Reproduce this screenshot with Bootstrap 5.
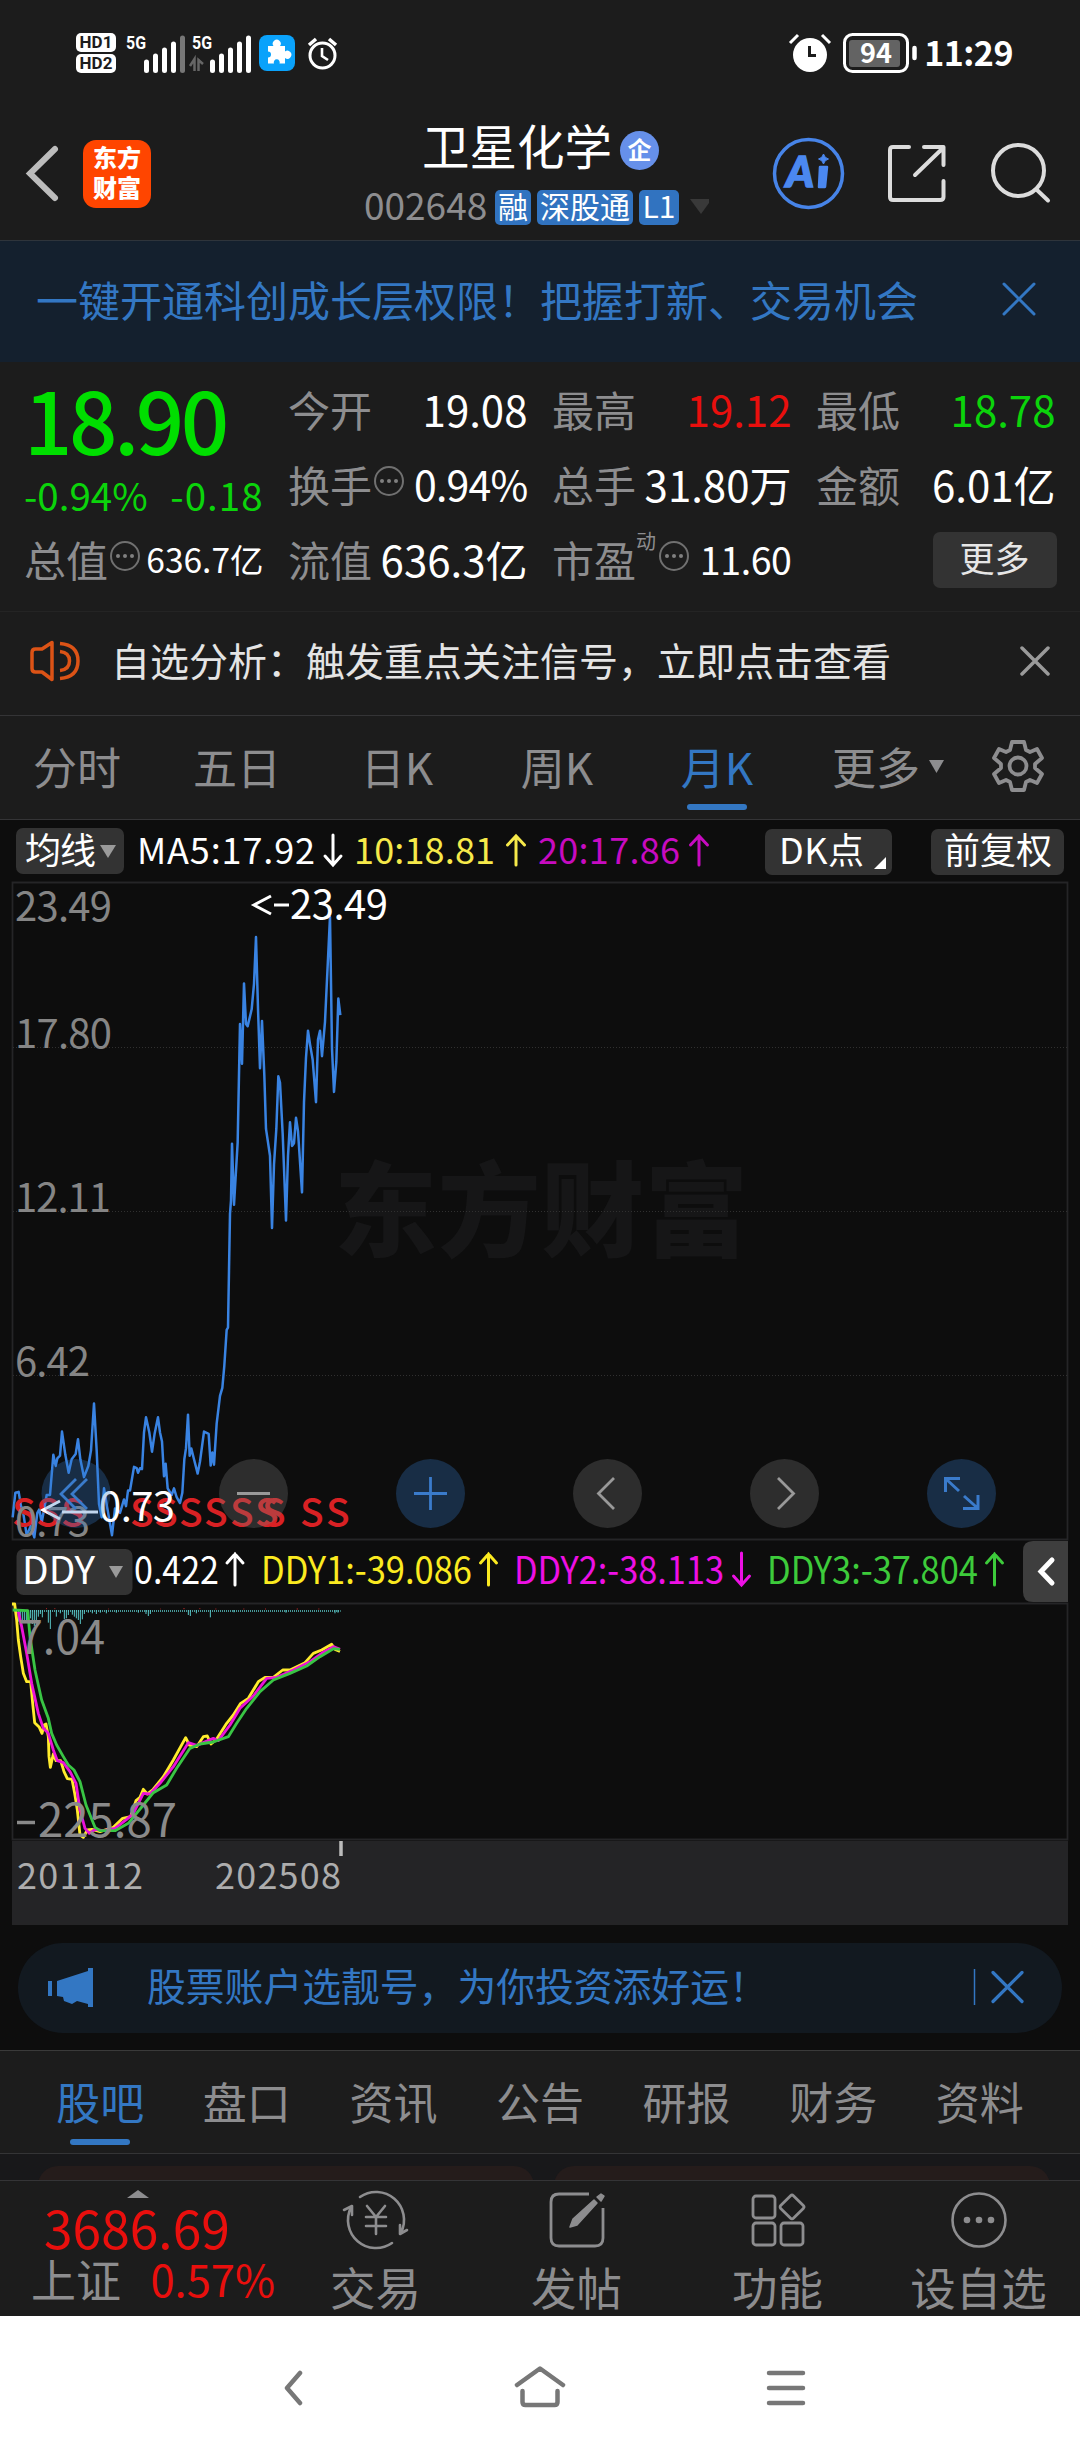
<!DOCTYPE html>
<html lang="zh-CN" data-bs-theme="dark">
<head>
<meta charset="utf-8">
<meta name="viewport" content="width=device-width, initial-scale=1">
<title>卫星化学 002648</title>
<link href="https://cdn.jsdelivr.net/npm/bootstrap@5.3.0/dist/css/bootstrap.min.css" rel="stylesheet">
<style>
body{width:1080px;height:2460px;margin:0;overflow:hidden;background:#0d0d0d;color:#fff;font-family:"Noto Sans CJK SC","Noto Sans",sans-serif;font-size:42px;line-height:1;white-space:nowrap}
svg{display:block;flex:none}
.panel-bg{background:#1c1c1c}
.rule-b{border-bottom:1px solid #343436}
.t-grey{color:#8d8d8f}.t-blue{color:#3377c3}.t-up{color:#e90f0d}.t-down{color:#0bd40b}
.status-bar{height:120px;padding:33px 67px 0 76px}
.hd-chip{width:40px;height:19px;border-radius:5px;background:#fff;color:#1c1c1c;font:700 17px/19px "Roboto",sans-serif;text-align:center}
.clock-txt{font:700 34px/40px "Noto Sans CJK SC",sans-serif;letter-spacing:-.5px;margin-left:6px;margin-top:-1px}
.top-nav{height:121px;border-bottom:1px solid #2e343b}
.brand-logo{width:68px;height:68px;border-radius:13px;background:#ff4500;font-size:24px;font-weight:900;line-height:30px;text-align:center;padding-top:2px}
.stock-name{font-size:47.5px;line-height:50px}
.ent-mark{width:39px;height:39px;border-radius:50%;background:#6690ea;font-size:24px;font-weight:700;line-height:36px;text-align:center}
.stock-code{font-size:37px;line-height:35px}
.tag-chip{height:35px;border-radius:5px;background:#3173c0;font-size:30px;line-height:31px;text-align:center}
.promo{height:121px;background:#14202e;padding:0 44px 5px 36px}
.quotes{height:249px;padding:9px 24px 0;gap:24.5px}
.q-col{width:239.5px}
.q-row{height:75px;display:flex;align-items:center;justify-content:space-between}
.last-price{height:75px;font-size:85px;font-weight:500;line-height:75px;letter-spacing:-3.5px;color:#00de00}
.last-price span{display:inline-block;padding-top:9px}
.notice{height:105px;padding:0 30px 5px 30px;font-size:39px;color:#e4e4e4;border-top:1px solid #242424}
.k-tabs{height:104px;font-size:44px;padding-bottom:3px}
.k-tabs .k-tab{width:160px;text-align:center}
.on-tab{position:relative}
.on-tab::after{content:"";position:absolute;left:50%;margin-left:-30px;top:60px;width:60px;height:6px;border-radius:3px;background:#3377c3}
.chart-zone{height:1230px}
.tool-chip{background:#333;border-radius:7px}
.ad-pill{width:1044px;height:90px;border-radius:45px;background:#121920;margin:18px 18px 16px;padding:0 38px 3px 30px;font-size:38.8px}
.info-tabs{height:104px;border-top:1px solid #3a3a3a;padding:0 27px 3px;font-size:44px}
.info-tabs>div{flex:1;text-align:center}
.peek{height:27px;background:#18181a;padding:12px 30px 0 38px;gap:20px;overflow:hidden}
.peek div{flex:1;height:40px;border-radius:26px;background:#251c1b}
.dock{height:135px}
.dock-item{width:201px;padding-top:10px;font-size:45.5px}
.dock-item svg{height:58px;margin-bottom:15px;overflow:visible}
.idx-box{width:275px;padding:9px 0 0 31px}
.sys-nav{height:144px;background:#fff}
</style>
</head>
<body>

<!-- status bar -->
<div class="status-bar panel-bg d-flex align-items-start">
  <div class="d-flex flex-column" style="gap:2px"><div class="hd-chip">HD1</div><div class="hd-chip">HD2</div></div>
  <svg class="ms-2" width="216" height="42" viewBox="124 33 216 42">
    <g fill="#fff" font-family="Roboto" font-weight="700" font-size="18"><text x="126" y="49" textLength="20" lengthAdjust="spacingAndGlyphs">5G</text><text x="192" y="49" textLength="20" lengthAdjust="spacingAndGlyphs">5G</text></g>
    <g stroke="#fff" stroke-width="5" stroke-linecap="round"><path d="M146.500 62V70.500M155.500 56V70.500M164.500 50V70.500M173.500 44V70.500M212.500 62V70.500M221.500 56V70.500M230.500 50V70.500M239.500 44V70.500M248.500 38V70.500"/><path d="M182.500 38V70.500" stroke="#777"/></g>
    <path d="M190 66L194.500 59V71M198.500 71V59M198.500 71V60L203 64" fill="none" stroke="#666" stroke-width="2.500"/>
    <rect x="259" y="35" width="36" height="36" rx="8" fill="#0aa2fb"/>
    <path d="M268 46h5.500a4 4 0 1 1 6.500 0h5v5.500a4 4 0 1 1 0 6.500v5.500h-5.500a3 3 0 1 0-5.500 0h-6v-6a3 3 0 1 0 0-6z" fill="#fff"/>
    <g fill="none" stroke="#fff"><circle cx="322.500" cy="55.500" r="12.500" stroke-width="3"/><path d="M322 48v8l6 4" stroke-width="2.600"/><path d="M309 45l7-6M329 39l7 6" stroke-width="3.500"/></g>
  </svg>
  <svg class="ms-auto" width="130" height="42" viewBox="788 33 130 42">
    <circle cx="810" cy="55" r="17" fill="#fff"/><path d="M809.500 46v9.500h6.500" fill="none" stroke="#1c1c1c" stroke-width="3"/><path d="M790 43l8-8M822 35l8 8" stroke="#fff" stroke-width="3"/>
    <rect x="844.500" y="34.500" width="63" height="37" rx="8" fill="none" stroke="#fff" stroke-width="3"/><rect x="849" y="40" width="51" height="27" rx="3" fill="#636363"/><path d="M914.500 48v10" stroke="#fff" stroke-width="4.500" stroke-linecap="round"/>
    <text x="860" y="63" font-size="27" font-weight="700" fill="#fff" textLength="32" lengthAdjust="spacingAndGlyphs">94</text>
  </svg>
  <div class="clock-txt">11:29</div>
</div>

<!-- header -->
<header class="top-nav panel-bg d-flex align-items-start">
  <svg width="83" height="90" viewBox="0 120 83 90"><path d="M55 149L30 173.500L55 198" fill="none" stroke="#bcbcbc" stroke-width="6" stroke-linecap="round"/></svg>
  <div class="brand-logo" style="margin-top:20px">东方<br>财富</div>
  <div style="margin-left:213px;width:405px">
    <div class="d-flex align-items-center" style="padding-left:58px"><span class="stock-name">卫星化学</span><span class="ent-mark" style="margin-left:8px;margin-top:11px">企</span></div>
    <div class="d-flex" style="margin-top:20px;gap:6px"><span class="stock-code t-grey" style="width:125px;margin-top:-3px">002648</span><span class="tag-chip" style="width:36px">融</span><span class="tag-chip" style="width:96px">深股通</span><span class="tag-chip" style="width:40px">L1</span>
    <svg width="24" height="35"><path d="M5 9h22l-11 15z" fill="#393939"/></svg></div>
  </div>
  <svg width="311" height="100" viewBox="769 120 311 100">
    <circle cx="808.500" cy="173.500" r="34" fill="none" stroke="#4784e8" stroke-width="3.500"/>
    <text x="786" y="187" font-family="Lato" font-weight="900" font-style="italic" font-size="42" fill="#4b88f0" stroke="#4b88f0" stroke-width="1.500" textLength="28" lengthAdjust="spacingAndGlyphs">A</text>
    <path d="M820 167h7l-2 20h-6z" fill="#4b88f0" stroke="#4b88f0" stroke-width="2.500" stroke-linejoin="round"/><path d="M823.500 154q1 4 5 5q-4 1-5 5q-1-4-5-5q4-1 5-5z" fill="#4b88f0" stroke="#4b88f0"/>
    <g fill="none" stroke="#dcdcdc" stroke-width="4" stroke-linecap="round" stroke-linejoin="round"><path d="M909 147H893Q890 147 890 150V197Q890 200 893 200H940Q943.500 200 943.500 197V181M924 147H943.500V165M943 148L915 175"/><circle cx="1018.500" cy="170.500" r="25.500"/><path d="M1037 190L1048 200.500"/></g>
  </svg>
</header>

<!-- promotion -->
<div class="promo d-flex align-items-center justify-content-between t-blue"><span>一键开通科创成长层权限！把握打新、交易机会</span>
  <svg width="34" height="34"><path d="M2 2L32 32M32 2L2 32" stroke="#3377c3" stroke-width="3" stroke-linecap="round"/></svg></div>

<!-- quotes -->
<section class="quotes panel-bg d-flex">
  <div class="q-col">
    <div class="last-price"><span>18.90</span></div>
    <div class="q-row t-down" style="font-size:38.5px;padding-top:22px"><span>-0.94%</span><span style="letter-spacing:1px">-0.18</span></div>
    <div class="q-row"><span class="d-flex t-grey">总值<svg width="32" height="42"><use href="#more-dot"/></svg></span><span style="font-size:33.500px">636.7亿</span></div>
  </div>
  <div class="q-col">
    <div class="q-row"><span class="t-grey">今开</span><span>19.08</span></div>
    <div class="q-row"><span class="d-flex t-grey">换手<svg width="32" height="42"><use href="#more-dot"/></svg></span><span style="font-size:41px;letter-spacing:-.8px">0.94%</span></div>
    <div class="q-row"><span class="t-grey">流值</span><span>636.3亿</span></div>
  </div>
  <div class="q-col">
    <div class="q-row"><span class="t-grey">最高</span><span class="t-up">19.12</span></div>
    <div class="q-row"><span class="t-grey">总手</span><span>31.80万</span></div>
    <div class="q-row"><span class="d-flex t-grey">市盈<span style="font-size:20px;margin-top:-7px;width:21px">动</span><svg width="32" height="42"><use href="#more-dot"/></svg></span><span style="font-size:37.500px;letter-spacing:-.4px">11.60</span></div>
  </div>
  <div class="q-col">
    <div class="q-row"><span class="t-grey">最低</span><span class="t-down">18.78</span></div>
    <div class="q-row"><span class="t-grey">金额</span><span>6.01亿</span></div>
    <div class="q-row justify-content-end"><span class="tool-chip text-center" style="width:124px;height:56px;font-size:35px;line-height:50px;margin:3px -1px 0 0;color:#e6e6e6">更多</span></div>
  </div>
</section>

<!-- notice -->
<div class="notice panel-bg rule-b d-flex align-items-center">
  <svg width="51" height="44" viewBox="30 640 51 44" fill="none" stroke="#dc5316" stroke-width="3.500" stroke-linejoin="round"><path d="M52 643.500V680.500L42 673H35.500Q32 673 32 669.500V653.500Q32 650 35.500 650H42Z"/><path d="M60 644.500Q78 646 78 662T60 679.500M60 652.500Q69.500 653.500 69.500 662T60 671.500"/></svg>
  <span style="margin-left:30px;padding-bottom:4px">自选分析：触发重点关注信号，立即点击查看</span>
  <svg class="ms-auto" width="30" height="30"><path d="M2 2L28 28M28 2L2 28" stroke="#9a9a9a" stroke-width="3.500" stroke-linecap="round"/></svg>
</div>

<!-- period tabs -->
<nav class="k-tabs panel-bg rule-b d-flex align-items-center t-grey">
  <div class="k-tab" style="margin-left:-3px">分时</div><div class="k-tab">五日</div><div class="k-tab">日K</div><div class="k-tab">周K</div><div class="k-tab on-tab t-blue">月K</div>
  <div class="d-flex align-items-center" style="margin-left:35px">更多<svg width="28" height="40"><path d="M9 14h15l-7.500 13z" fill="#8d8d8f"/></svg></div>
  <svg style="margin-left:42px" width="56" height="56" viewBox="-28 -28 56 56" fill="none" stroke="#8d8d8f" stroke-width="3.800" stroke-linejoin="round"><circle r="8.500"/><path d="M-6 -24H6L8 -16L12 -14L19 -17L24 -8L17 -2V2L24 8L19 17L12 14L8 16L6 24H-6L-8 16L-12 14L-19 17L-24 8L-17 2V-2L-24 -8L-19 -17L-12 -14L-8 -16Z"/></svg>
</nav>

<!-- charts -->
<main class="chart-zone">
<svg width="1080" height="1105" viewBox="0 820 1080 1105" font-family="Noto Sans CJK SC">
  <!-- moving averages -->
  <g fill="#333"><rect x="16" y="828" width="108" height="46" rx="7"/><rect x="765" y="829" width="127" height="46" rx="7"/><rect x="931" y="829" width="133" height="46" rx="7"/></g>
  <g font-size="36" fill="#fff"><text x="25" y="864" textLength="71">均线</text><text x="137" y="864" textLength="178">MA5:17.92</text><text x="779" y="864" textLength="85">DK点</text><text x="944" y="864" textLength="108">前复权</text></g>
  <path d="M100 845h16l-8 13z" fill="#9a9a9a"/><path d="M886 857v12h-12z" fill="#fff"/>
  <g font-size="36"><text x="354" y="864" fill="#f6e94a" textLength="141">10:18.81</text><text x="538" y="864" fill="#c70bc0" textLength="142">20:17.86</text></g>
  <g fill="none" stroke-width="3" stroke-linecap="round"><path d="M333 835V864M325 856L333 865L341 856" stroke="#fff"/><path d="M516 865V836M507.500 845L516 836L524.500 845" stroke="#f6e94a"/><path d="M699 865V836M690.500 845L699 836L707.500 845" stroke="#c70bc0"/></g>

  <!-- price chart -->
  <text x="334" y="1249" font-size="103" font-weight="900" fill="#161617" textLength="414">东方财富</text>
  <path d="M12.500 882.500H1067.500V1539.500H12.500Z" fill="none" stroke="#252527" stroke-width="1.800"/>
  <path d="M13 1047.500H1067M13 1211.500H1067M13 1375.500H1067" stroke="#303030" stroke-dasharray="1 2"/>
  <g font-size="40" fill="#858585"><text x="15" y="921" textLength="97">23.49</text><text x="15" y="1048" textLength="97">17.80</text><text x="15" y="1212" textLength="96">12.11</text><text x="15" y="1376" textLength="75">6.42</text></g>
  <g transform="translate(0 870) scale(.33333 .44643)"><polyline vector-effect="non-scaling-stroke" fill="none" stroke="#3983e2" stroke-width="2.500" stroke-linejoin="round" points="38,1450 46,1395 56,1393 63,1425 68,1432 80,1490 92,1470 103,1495 112,1440 118,1432 125,1462 140,1400 150,1400 160,1310 167,1335 172,1318 180,1312 186,1258 196,1310 206,1350 215,1320 227,1308 234,1275 241,1320 252,1360 265,1335 273,1300 282,1195 290,1300 297,1420 305,1450 312,1385 322,1430 336,1490 345,1430 360,1440 372,1410 378,1425 384,1390 390,1390 402,1337 410,1340 414,1350 420,1340 426,1342 432,1260 438,1226 448,1260 456,1303 464,1262 474,1226 480,1260 486,1280 492,1358 497,1330 503,1385 515,1400 522,1385 530,1405 540,1418 547,1395 553,1320 558,1295 564,1220 569,1312 574,1296 582,1320 593,1352 600,1325 612,1258 626,1263 632,1334 637,1305 642,1332 650,1240 660,1178 667,1160 673,1110 680,1030 684,1025 690,770 693,740 696,613 702,750 713,610 720,345 726,434 732,254 738,345 743,350 755,312 762,255 768,150 774,310 780,444 786,338 793,460 798,580 810,640 816,802 822,660 829,580 835,462 840,476 848,590 858,785 864,640 870,565 876,618 882,612 888,555 894,585 906,722 912,520 918,420 924,360 930,390 938,425 948,520 954,380 960,360 966,417 975,340 990,105 996,400 1002,497 1009,430 1015,288 1021,325"/></g>
  <text font-size="39" font-weight="500" fill="#d92124" y="1527" x="12 36 61 130 154 179 204 230 255 262 300 326">SSSSSSSSSSSS</text>
  <text x="15" y="1536" font-size="40" fill="#858585" textLength="75">0.73</text>
  <g font-size="40" fill="#fff"><text x="290" y="919" textLength="98">23.49</text><text x="99" y="1521" textLength="76">0.73</text></g>
  <g fill="none" stroke="#fff" stroke-width="3"><path d="M271 896L254 905L271 914M274 905H289"/><path d="M60 1501L43 1510L60 1519M62 1512H98"/></g>
  <g fill="#3278c8" fill-opacity=".3"><circle cx="76" cy="1493.500" r="34.500"/><circle cx="430.500" cy="1493.500" r="34.500"/><circle cx="961.500" cy="1493.500" r="34.500"/></g>
  <g fill="#787878" fill-opacity=".3"><circle cx="253.500" cy="1493.500" r="34.500"/><circle cx="607.500" cy="1493.500" r="34.500"/><circle cx="784.500" cy="1493.500" r="34.500"/></g>
  <g fill="none" stroke="#3a7bcb" stroke-width="2.800"><path d="M76 1479L61 1494L76 1509M87 1479L72 1494L87 1509M414 1493.500H447M430.500 1477V1510"/><path d="M945.500 1497V1483.500H960M946 1484L959 1496M978 1500V1513.500H963M977.500 1513L964 1501" stroke-width="3" transform="translate(0 -5)"/></g>
  <g fill="none" stroke="#999" stroke-width="2.800"><path d="M237 1493.500H270M614 1478L598.500 1493.500L614 1509M778 1478L793.500 1493.500L778 1509"/></g>

  <!-- DDY readout -->
  <rect x="16.500" y="1549" width="116" height="46" rx="7" fill="#333"/><path d="M109 1566h14l-7 12z" fill="#9a9a9a"/>
  <g font-size="38"><text x="22" y="1584" fill="#fff" textLength="73" lengthAdjust="spacingAndGlyphs">DDY</text><text x="134" y="1584" fill="#fff" textLength="85" lengthAdjust="spacingAndGlyphs">0.422</text>
  <text x="261" y="1584" fill="#fbea20" textLength="211" lengthAdjust="spacingAndGlyphs">DDY1:-39.086</text><text x="514" y="1584" fill="#ed10e4" textLength="210" lengthAdjust="spacingAndGlyphs">DDY2:-38.113</text><text x="767" y="1584" fill="#3dcb3b" textLength="211" lengthAdjust="spacingAndGlyphs">DDY3:-37.804</text></g>
  <g fill="none" stroke-width="3" stroke-linecap="round"><path d="M235 1585V1554M227 1563L235 1554L243 1563" stroke="#fff"/><path d="M488.500 1585V1554M480.500 1563L488.500 1554L496.500 1563" stroke="#fbea20"/><path d="M741.500 1553V1584M733.500 1576L741.500 1585L749.500 1576" stroke="#ed10e4"/><path d="M994.500 1585V1554M986.500 1563L994.500 1554L1002.500 1563" stroke="#3dcb3b"/></g>

  <!-- DDY chart -->
  <path d="M12.500 1603.500H1067.500V1839.500H12.500Z" fill="none" stroke="#252527" stroke-width="1.800"/>
  <path d="M1068 1541V1602H1033Q1023 1602 1023 1592V1551Q1023 1541 1033 1541Z" fill="#3e3e3e"/><path d="M1052 1560L1041 1571.500L1052 1583" fill="none" stroke="#fff" stroke-width="5" stroke-linecap="round"/>
  <g transform="translate(0 1590) scale(.33333)" fill="none">
    <path d="M48 63H1022" stroke="#5ac8c9" stroke-width="5" stroke-dasharray="3 3"/>
    <path d="M55 60v35M61 60v45M67 60v38M73 60v30M79 60v35M91 60v25M97 60v42M103 60v48M109 60v32M115 60v20M121 60v12M127 60v22M145 60v38M151 60v57M169 60v20M181 60v10M193 60v27M199 60v25M205 60v15M217 60v14M223 60v20M229 60v25M235 60v30M241 60v42M247 60v28M253 60v12M265 60v8M277 60v10M289 60v12M301 60v8M319 60v10M349 60v8M415 60v8M438 60v12M445 60v18M451 60v12M565 60v15M571 60v18M589 60v10M631 60v22M702 60v7M858 60v8M1005 60v10M1014 60v8" stroke="#5ac8c9" stroke-width="3"/>
    <path d="M80 58h2M138 56h3M163 56h3M325 57h2M480 57h2M550 56h4M598 56h3M646 57h3M730 57h3M795 57h3M890 57h4M955 57h3" stroke="#b52a2a" stroke-width="3"/>
    <g stroke-width="8.500" stroke-linejoin="round">
    <polyline stroke="#ffeb2c" points="36,42 44,42 50,90 55,150 62,200 70,250 80,275 92,275 98,340 104,398 118,412 126,430 132,405 138,402 145,440 147,500 151,532 160,492 168,512 182,512 192,545 202,566 216,568 224,610 232,660 240,735 250,742 262,720 276,718 300,725 340,712 368,685 392,680 408,632 420,622 430,598 442,612 458,600 490,560 520,510 557,443 568,465 590,470 610,440 622,438 633,462 648,450 680,400 700,375 722,340 745,325 775,275 795,262 820,262 848,240 870,240 915,218 940,190 965,180 995,163 1005,178 1020,184"/>
    <polyline stroke="#ec12d8" points="55,65 65,110 80,190 95,280 115,370 130,415 145,430 160,480 172,512 190,518 210,545 228,580 240,660 255,715 268,730 285,718 310,722 345,715 380,688 400,670 430,610 450,612 480,580 520,530 565,458 590,466 640,445 655,452 690,405 720,355 760,318 800,265 830,262 880,240 930,215 965,190 1000,170 1020,178"/>
    <polyline stroke="#39c544" points="38,60 83,62 90,140 105,240 125,330 145,385 155,430 170,465 190,500 205,525 222,540 240,575 258,645 285,712 300,722 345,722 385,700 430,645 460,608 500,585 530,535 570,475 600,462 640,456 685,440 710,400 740,355 780,305 820,270 870,250 920,228 960,200 1000,176 1020,178"/></g>
  </g>
  <g font-size="46" fill="#8a8a8a"><text x="18" y="1654" textLength="87" lengthAdjust="spacingAndGlyphs">7.04</text><text x="38" y="1837" textLength="139" lengthAdjust="spacingAndGlyphs">225.87</text><path d="M17 1822.500H35" stroke="#8a8a8a" stroke-width="3.500"/></g>
  <!-- date axis -->
  <rect x="12" y="1841" width="1056" height="84" fill="#242426"/><path d="M341 1841V1856" stroke="#bbb" stroke-width="3.500"/>
  <g font-size="36" fill="#adadad"><text x="17" y="1889" textLength="126">201112</text><text x="215" y="1889" textLength="126">202508</text></g>
</svg>

<div class="ad-pill t-blue d-flex align-items-center">
  <svg width="46" height="42" viewBox="48 1966 46 42" fill="#3377c3"><path d="M48 1981h4v15h-4zM57 1981L88 1971V1968H93V2007H88V2004L77 2001L72 2004L64 2001L63 1997L57 1996Z"/></svg>
  <span style="margin-left:53px;padding-bottom:4px">股票账户选靓号，为你投资添好运！</span>
  <svg class="ms-auto" width="51" height="38"><path d="M1.500 1V37" stroke="#3377c3" stroke-width="1.500"/><path d="M20 4.500L49 33.500M49 4.500L20 33.500" stroke="#3377c3" stroke-width="3.200" stroke-linecap="round"/></svg>
</div>
</main>

<!-- information tabs -->
<nav class="info-tabs panel-bg rule-b d-flex align-items-center t-grey"><div class="on-tab t-blue">股吧</div><div>盘口</div><div>资讯</div><div>公告</div><div>研报</div><div>财务</div><div>资料</div></nav>
<div class="peek rule-b d-flex"><div></div><div></div></div>

<!-- bottom dock -->
<footer class="dock panel-bg d-flex t-grey">
  <div class="idx-box">
    <svg style="margin-left:96px" width="22" height="8"><path d="M0 8L11 0L22 8z" fill="#8d8d8f"/></svg>
    <div class="t-up" style="font-size:51.500px;padding-left:13px;line-height:51px;margin-top:3px">3686.69</div>
    <div class="d-flex align-items-center" style="font-size:45px;margin-top:4px"><span style="width:121px">上证</span><span class="t-up" style="font-size:43.500px">0.57%</span></div>
  </div>
  <div class="dock-item d-flex flex-column align-items-center"><svg width="66" viewBox="-33 -29 66 58" fill="none" stroke="#8d8d8f" stroke-width="2.600" stroke-linecap="round" stroke-linejoin="round"><path d="M-16 -23A28 28 0 0 1 25 12.600L24 14L31 10M24 14L24 5M16 23A28 28 0 0 1 -25 -12.600L-24 -14L-32 -10M-24 -14L-24 -5"/><path d="M-9 -14L0 -3L9 -14M0 -3V14M-10 -3H10M-10 6H10"/></svg><span>交易</span></div>
  <div class="dock-item d-flex flex-column align-items-center"><svg width="58" viewBox="-29 -29 58 58" fill="none" stroke="#8d8d8f" stroke-width="2.800" stroke-linejoin="round"><path d="M12 -26H-18Q-26 -26 -26 -18V18Q-26 26 -18 26H18Q26 26 26 18V-12"/><path d="M-7 7L-4 -1L17 -20L20 -17L0 5ZM20 -23L24 -26L27 -24L24 -19Z" fill="#8d8d8f" stroke-width="1.500"/></svg><span>发帖</span></div>
  <div class="dock-item d-flex flex-column align-items-center"><svg width="58" viewBox="-29 -29 58 58" fill="none" stroke="#8d8d8f" stroke-width="2.800"><rect x="-25" y="-24" width="22" height="22" rx="3"/><rect x="-25" y="3" width="22" height="22" rx="3"/><rect x="3" y="3" width="22" height="22" rx="3"/><rect x="5" y="-22" width="18" height="18" rx="2" transform="rotate(45 14 -13)"/></svg><span>功能</span></div>
  <div class="dock-item d-flex flex-column align-items-center"><svg width="58" viewBox="-29 -29 58 58" fill="#8d8d8f"><circle r="26.500" fill="none" stroke="#8d8d8f" stroke-width="2.600"/><circle cx="-12" r="3.300"/><circle r="3.300"/><circle cx="12" r="3.300"/></svg><span>设自选</span></div>
</footer>

<!-- system navigation -->
<div class="sys-nav"><svg width="1080" height="144" viewBox="0 2316 1080 144" fill="none" stroke="#777" stroke-width="4.500" stroke-linecap="round" stroke-linejoin="round"><path d="M300 2373L287 2388L300 2403M517 2385L540 2368.500L563 2385M522.500 2391V2402Q522.500 2405 525.500 2405H554.500Q557.500 2405 557.500 2402V2391M769 2373H803M769 2388H803M769 2403H803"/></svg></div>

<svg width="0" height="0" class="position-absolute"><defs><g id="more-dot"><circle cx="17" cy="18" r="14" fill="none" stroke="#707070" stroke-width="2"/><g fill="#808080"><circle cx="10" cy="18" r="2"/><circle cx="17" cy="18" r="2"/><circle cx="24" cy="18" r="2"/></g></g></defs></svg>
<script src="https://cdn.jsdelivr.net/npm/bootstrap@5.3.0/dist/js/bootstrap.bundle.min.js"></script>
</body>
</html>
